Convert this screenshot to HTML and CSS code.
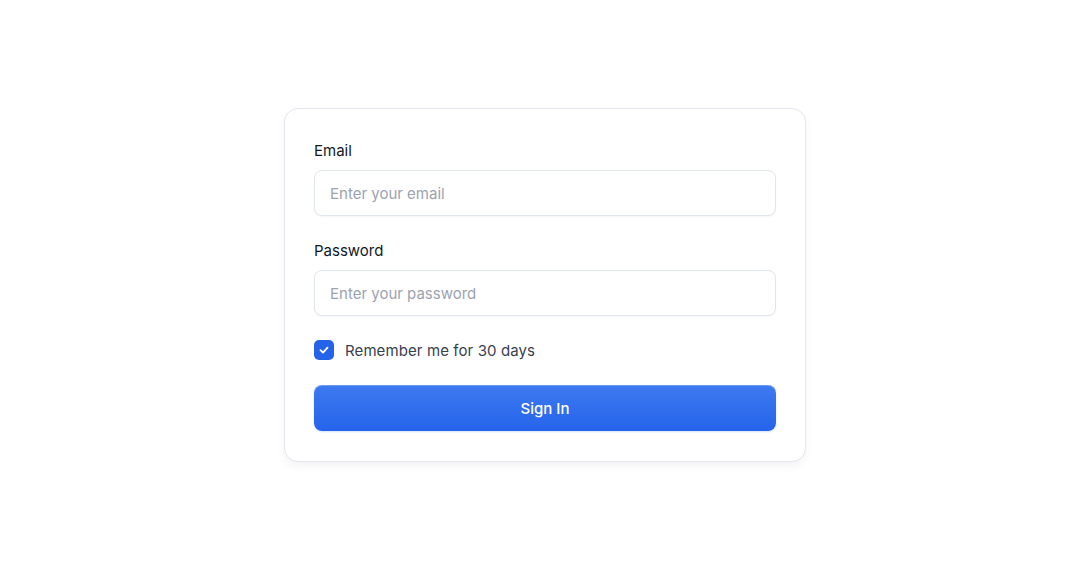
FILE: index.html
```html
<!doctype html>
<html>
  <head>
    <meta charset="utf-8">
    <title>Sign in</title>
    <link rel="stylesheet" href="styles.css">
  </head>
  <body>
    <main class="page">
      <form class="card">
        <div class="field">
          <label for="email">Email</label>
          <input id="email" type="email" placeholder="Enter your email">
        </div>
        <div class="field">
          <label for="password">Password</label>
          <input id="password" type="password" placeholder="Enter your password">
        </div>
        <label class="remember">
          <span class="check">
            <svg width="12" height="12" viewBox="0 0 12 12"><path d="M2.5 6.2 5 8.6 9.5 3.6" fill="none" stroke="#fff" stroke-width="1.8" stroke-linecap="round" stroke-linejoin="round"/></svg>
          </span>
          Remember me for 30 days
        </label>
        <button type="button" class="submit">Sign In</button>
      </form>
    </main>
  </body>
</html>
```

FILE: styles.css
```css
html, body {
  margin: 0;
  padding: 0;
  background: #fff;
}

* {
  box-sizing: border-box;
  font-family: Inter, "Noto Sans", sans-serif;
}

.page {
  height: 576px;
  display: flex;
  align-items: center;
  justify-content: center;
  padding-left: 2px;
  padding-bottom: 6px;
}

.card {
  width: 522px;
  padding: 30px 29px;
  border: 1px solid #e3e6ee;
  border-radius: 14px;
  background: #fff;
  box-shadow: 0 4px 10px rgba(15, 23, 42, 0.05);
}

.field {
  margin-bottom: 23px;
}

.field label {
  display: block;
  font-size: 15px;
  line-height: 24px;
  color: #111827;
  margin-bottom: 7px;
}

.field input {
  display: block;
  width: 100%;
  height: 46px;
  padding: 0 15px;
  border: 1px solid #e1e5ed;
  border-radius: 8px;
  font-size: 15px;
  color: #111827;
  outline: none;
  box-shadow: 0 1px 2px rgba(15, 23, 42, 0.04);
}

.field input::placeholder {
  color: #9ca3af;
}

.remember {
  display: flex;
  align-items: center;
  gap: 11px;
  height: 20px;
  margin-top: 24px;
  margin-bottom: 25px;
  font-size: 15px;
  letter-spacing: 0.1px;
  color: #374151;
}

.check {
  width: 20px;
  height: 20px;
  border-radius: 5px;
  background: #2563eb;
  display: flex;
  align-items: center;
  justify-content: center;
}

.submit {
  display: block;
  width: 100%;
  height: 46px;
  border: none;
  border-radius: 8px;
  background: linear-gradient(180deg, #3d7af0, #2563eb);
  box-shadow: inset 0 1px 0 rgba(255, 255, 255, 0.25), 0 1px 2px rgba(37, 99, 235, 0.2);
  color: #fff;
  font-size: 15px;
  font-weight: 500;
  cursor: pointer;
}
```
